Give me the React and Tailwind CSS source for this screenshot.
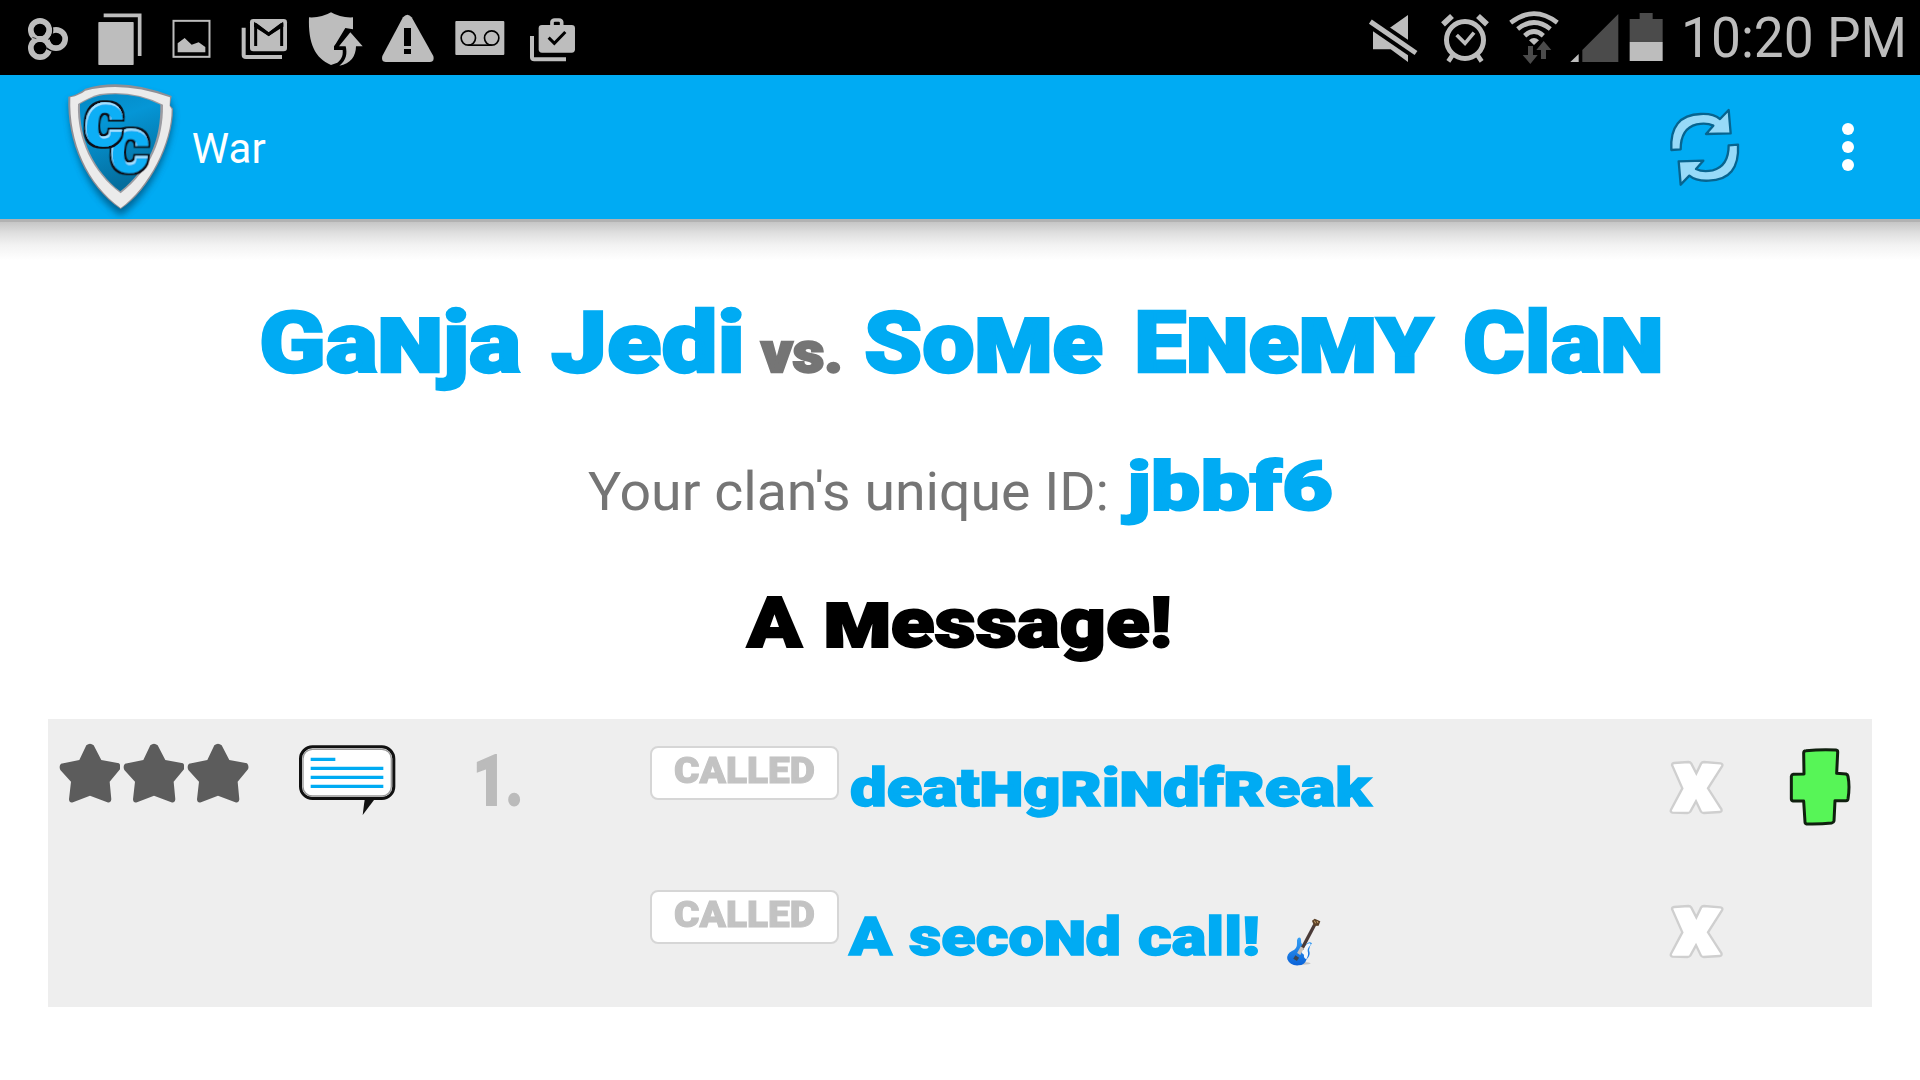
import React, { useLayoutEffect, useRef } from "react";

const SMALL_CAPS = "nmrhy";

// Draws one word stretched to an exact width; the display face has small-cap n, m, r, h and y.
function Fit({ text, width, plain = false, className = "" }) {
  const ref = useRef(null);
  useLayoutEffect(() => {
    const el = ref.current;
    const fit = () => {
      el.style.transform = "none";
      const natural = el.getBoundingClientRect().width;
      el.style.transform = `scaleX(${width / natural})`;
    };
    fit();
    document.fonts.ready.then(fit);
  }, [width]);
  return (
    <span className="block shrink-0 whitespace-nowrap" style={{ width }}>
      <span ref={ref} className={"inline-block origin-left " + className}>
        {plain
          ? text
          : text.split("").map((c, i) =>
              SMALL_CAPS.includes(c) ? (
                <span key={i} className="text-[1.1em] leading-[0] [font-variant-caps:small-caps]">
                  {c}
                </span>
              ) : (
                c
              )
            )}
      </span>
    </span>
  );
}

const DISPLAY = "font-['Roboto',sans-serif] font-black [-webkit-text-stroke:0.028em_currentColor]";

function Icon({ x, w, h = 225, y = 0, className = "", children }) {
  return (
    <svg
      viewBox={`${x} ${y} ${w} ${h}`}
      width={w / 3}
      height={h / 3}
      className={"block shrink-0 " + className}
      fill="#bdbdbd"
    >
      {children}
    </svg>
  );
}

function StatusBar() {
  return (
    <div className="flex h-[75px] w-full justify-between bg-black">
      <div className="flex">
        <Icon x={0} w={250}>
          <g fill="none" stroke="#bdbdbd" strokeWidth="17">
            <circle cx="168" cy="117" r="27.5" />
            <circle cx="120" cy="90" r="38" stroke="#000" strokeWidth="4" />
            <circle cx="120" cy="90" r="27.5" />
            <circle cx="120" cy="144" r="27.5" />
            <path d="M139 145l16 8" stroke="#000" strokeWidth="4" />
            <path d="M97 112l12 4M133 136l18 16" stroke="#000" strokeWidth="2" />
          </g>
        </Icon>
        <Icon x={250} w={225}>
          <rect x="296" y="66" width="106" height="129" rx="2" />
          <path d="M312 46H420V168" fill="none" stroke="#bdbdbd" strokeWidth="11" />
        </Icon>
        <Icon x={475} w={200}>
          <rect x="521.5" y="62.5" width="108" height="108" fill="none" stroke="#bdbdbd" strokeWidth="6" />
          <path d="M534 157V130l21-16 21 20 21-7 20 14v16z" />
        </Icon>
        <Icon x={675} w={225}>
          <rect x="750" y="57" width="111" height="97" rx="10" />
          <path d="M767 138V74l39 29 39-29v64" fill="none" stroke="#000" strokeWidth="9" />
          <path d="M762 70h8l36 27 36-27h8v10l-44 28-44-28z" fill="#000" />
          <path d="M731 83V165Q731 171 738 171H846" fill="none" stroke="#bdbdbd" strokeWidth="12" />
        </Icon>
        <Icon x={0} w={225}>
          <path d="M27 52Q65 54 93 37Q121 54 159 52V88L136 84 102 140V150H128C130 170 122 180 112 188L93 195C45 175 24 130 27 52z" />
          <path d="M150 88L102 139V148H132C135 170 125 188 104 194L118 200C155 188 168 170 168 139H190z" fill="#000" />
          <path d="M151 97L188 139H168C168 168 152 192 118 197C140 180 142 160 137 139H117z" />
        </Icon>
        <Icon x={225} w={200}>
          <path d="M309 52Q322 37 335 52L400 168Q405 185 390 186H257Q242 185 247 168z" />
          <rect x="312" y="84" width="21" height="54" fill="#000" />
          <rect x="312" y="147" width="21" height="15" fill="#000" />
        </Icon>
        <Icon x={425} w={225}>
          <rect x="465" y="63" width="147" height="102" rx="3" />
          <g fill="none" stroke="#000" strokeWidth="5">
            <circle cx="504" cy="114" r="21.5" />
            <circle cx="574" cy="114" r="21.5" />
            <path d="M504 135.5H574" />
          </g>
        </Icon>
        <Icon x={650} w={200}>
          <path d="M755 80V66Q756 60 763 60H776Q783 60 784 66V80" fill="none" stroke="#bdbdbd" strokeWidth="11" />
          <rect x="715" y="75" width="109" height="83" rx="10" />
          <path d="M745 113l17 17 33-34" fill="none" stroke="#000" strokeWidth="9" />
          <path d="M695 108V172Q695 178 702 178H797" fill="none" stroke="#bdbdbd" strokeWidth="12" />
        </Icon>
      </div>
      <div className="flex">
        <Icon x={0} w={210}>
          <path d="M144 45V186L92 148H39V92L70 92 92 82z" />
          <path d="M31 65L168 159" stroke="#000" strokeWidth="38" />
          <path d="M60 50l30 32-12-50z" fill="#000" />
          <path d="M31 65L168 159" stroke="#bdbdbd" strokeWidth="15" />
        </Icon>
        <Icon x={210} w={210}>
          <circle cx="315" cy="120" r="55.5" fill="none" stroke="#bdbdbd" strokeWidth="15" />
          <path d="M290 105l25 25 27-32" fill="none" stroke="#bdbdbd" strokeWidth="11" />
          <path d="M278 165l-13 19M352 165l13 19" stroke="#bdbdbd" strokeWidth="14" />
          <path d="M249 73l27-25M381 73l-27-25" stroke="#bdbdbd" strokeWidth="17" strokeLinecap="butt" />
        </Icon>
        <Icon x={420} w={200}>
          <g fill="none" stroke="#bdbdbd" strokeWidth="14">
            <path d="M452 68Q522 14 592 68" />
            <path d="M473 87Q522 48 571 87" />
            <path d="M494 107Q522 82 550 107" />
          </g>
          <path d="M507 121Q522 107 537 121L522 135z" />
          <path d="M504 138h15v27h14l-22 27-23-27h16zM543 177v-27h-14l22-27 23 27h-16v27z" fill="#4b4b4b" />
        </Icon>
        <Icon x={620} w={170}>
          <path d="M630 186L655 162V186z" />
          <path d="M666 186V150L774 42V186z" fill="#4b4b4b" />
        </Icon>
        <Icon x={790} w={170}>
          <path d="M810 126V57H840V39H879V57H909V126z" fill="#4b4b4b" />
          <rect x="810" y="126" width="99" height="57" />
        </Icon>
        <div className="h-[75px] w-[240px] pl-[1px] font-['Roboto',sans-serif] text-[55px] leading-[77px] text-[#bdbdbd]">
          <Fit plain text="10:20 PM" width={226} />
        </div>
      </div>
    </div>
  );
}

function Logo() {
  return (
    <svg viewBox="150 227 410 432" width="136.667" height="144" className="ml-[50px] block shrink-0">
      <defs>
        <linearGradient id="shieldFill" x1="0" y1="0" x2="0.3" y2="1">
          <stop offset="0" stopColor="#0488c4" />
          <stop offset="0.35" stopColor="#0596d6" />
          <stop offset="1" stopColor="#046d9d" />
        </linearGradient>
        <filter id="soft" x="-20%" y="-20%" width="140%" height="140%">
          <feGaussianBlur stdDeviation="11" />
        </filter>
        <filter id="outline" x="-20%" y="-20%" width="140%" height="140%">
          <feMorphology in="SourceAlpha" operator="dilate" radius="5" result="fat" />
          <feFlood floodColor="#0b1114" />
          <feComposite in2="fat" operator="in" result="edge" />
          <feOffset in="SourceAlpha" dx="4" dy="5" result="inner" />
          <feComposite in="SourceAlpha" in2="inner" operator="out" result="rim" />
          <feFlood floodColor="#a5e2ff" />
          <feComposite in2="rim" operator="in" result="shine" />
          <feMerge>
            <feMergeNode in="edge" />
            <feMergeNode in="SourceGraphic" />
            <feMergeNode in="shine" />
          </feMerge>
        </filter>
      </defs>
      <path
        d="M208 305Q240 300 258 280Q370 260 508 300L519 340C520 445 450 590 362 648C260 580 206 440 208 305z"
        fill="#034f78"
        opacity="0.75"
        filter="url(#soft)"
      />
      <path
        d="M205 292Q235 285 256 268Q370 233 515 290L510 318L519 328C520 430 450 572 362 629C260 560 200 430 205 292z"
        fill="#8f8f95"
      />
      <path
        d="M211 294Q240 287 256 274Q370 244 510 294L509 320L515 329C516 430 447 565 362 626C263 555 206 430 211 294z"
        fill="#ebebeb"
      />
      <path d="M234 314Q270 292 300 284Q400 270 489 316C490 420 455 505 362 582C278 520 230 420 234 314z" fill="#9b9ba1" />
      <path d="M240 314Q280 290 310 287Q400 276 481 316C483 420 448 505 361 576C282 515 237 420 240 314z" fill="url(#shieldFill)" />
      <g
        fontFamily="Roboto"
        fontWeight="900"
        fontSize="174"
        stroke="#10aff6"
        strokeWidth="8"
        strokeLinejoin="miter"
        fill="#10aff6"
      >
        <text transform="translate(330 516) skewX(-3) scale(0.97 1)" filter="url(#outline)">
          C
        </text>
        <text transform="translate(252 437) skewX(-3) scale(0.98 1)" filter="url(#outline)">
          C
        </text>
      </g>
    </svg>
  );
}

const ARROW =
  "M64 165Q58 60 152 57Q190 55 210 72L236 45L242 115L168 117L190 92Q170 82 140 88Q92 100 92 163z";

function AppBar() {
  return (
    <div className="flex h-[144px] w-full items-center bg-[#00abf3]">
      <Logo />
      <div className="ml-[5px] flex-1 pt-[4px] font-['Roboto',sans-serif] text-[42px] leading-[50px] tracking-[0.2px] text-white">
        War
      </div>
      <svg viewBox="0 0 330 330" width="110" height="110" className="mt-[6px] mr-[82px] block shrink-0">
        <g fill="#97daf8" stroke="#07648f" strokeWidth="7" strokeLinejoin="round">
          <path d={ARROW} />
          <path d={ARROW} transform="rotate(180 164 157)" />
        </g>
      </svg>
      <div className="mr-[66px] flex flex-col gap-[6px] pb-[1px]">
        <span className="size-[12px] rounded-full bg-white" />
        <span className="size-[12px] rounded-full bg-white" />
        <span className="size-[12px] rounded-full bg-white" />
      </div>
    </div>
  );
}

function Star() {
  return (
    <svg viewBox="55 99 185 181" width="61.667" height="60.333" className="block">
      <path
        d="M137 106Q148 96 159 106L182 150L235 160Q242 168 238 178L207 215L212 268Q210 280 200 277L148 257L97 277Q86 280 85 268L91 215L59 180Q54 168 61 161L116 150z"
        fill="#5c5c5c"
      />
    </svg>
  );
}

function Bubble() {
  return (
    <svg viewBox="774 100 295 220" width="98.333" height="73.333" className="block">
      <path d="M975 262L968 316L1006 266z" fill="#111" />
      <rect x="781.5" y="111.5" width="280" height="155" rx="36" fill="#fff" stroke="#111" strokeWidth="9" />
      <rect x="789" y="119" width="265" height="140" rx="28" fill="none" stroke="#999" strokeWidth="4" />
      <path d="M812 149H886M812 176H1030M812 203H1030M812 230H1030" stroke="#00abf3" strokeWidth="10" />
    </svg>
  );
}

function CalledBadge() {
  return (
    <div className="flex h-[54px] w-[189px] shrink-0 rounded-[8px] border-2 border-[#d6d6d6] bg-white pl-[22px]">
      <div className={`${DISPLAY} text-[36px] leading-[47px] text-[#c3c3c3]`}>
        <Fit text="CALLED" width={141} />
      </div>
    </div>
  );
}

function CloseMark() {
  return (
    <svg viewBox="88 150 168 168" width="56" height="56" className="block">
      <path
        d="M97 165Q97 160 103 159L146 156Q152 156 155 161L170 190L184 161Q187 156 193 156L243 160Q251 162 247 169L205 235L245 297Q248 304 241 306L192 309Q187 309 184 305L169 274L152 305Q149 309 143 309L98 308Q91 306 94 299L128 235z"
        fill="#fff"
        stroke="#cfcfcf"
        strokeWidth="7"
      />
    </svg>
  );
}

function Plus() {
  return (
    <svg viewBox="442 112 192 240" width="64" height="80" className="block">
      <path
        d="M489 130Q489 123 496 123Q540 119 586 121Q592 122 591 129L588 191L616 193Q621 195 622 200Q628 230 622 268Q621 273 616 273L583 273L580 334Q579 339 573 340Q540 344 498 343Q493 342 493 337L489 274L457 274Q452 273 452 268V200Q453 195 458 194L490 193z"
        fill="#57f557"
        stroke="#10200f"
        strokeWidth="9"
        strokeLinejoin="round"
      />
    </svg>
  );
}

function Guitar() {
  return (
    <svg viewBox="45 35 115 150" width="38.333" height="50" className="block">
      <defs>
        <linearGradient id="body" x1="0" y1="0" x2="0" y2="1">
          <stop offset="0" stopColor="#35a0f5" />
          <stop offset="1" stopColor="#0a62d8" />
        </linearGradient>
      </defs>
      <ellipse cx="100" cy="174" rx="22" ry="4" fill="#c4c4c4" />
      <path
        d="M84 98Q92 94 93 103Q92 114 98 118Q108 122 113 113Q120 108 126 114Q118 122 117 134Q123 150 110 162Q104 180 86 180Q60 182 52 162Q49 145 66 137Q82 130 81 115Q79 103 84 98z"
        fill="url(#body)"
      />
      <path d="M94 130L112 116Q122 110 122 118Q112 128 113 137Q117 148 109 162Q100 158 102 148Q92 142 94 130z" fill="#f4f8fc" />
      <path d="M95 132L134 58" stroke="#4a3b38" strokeWidth="10" />
      <path d="M86 146L97 126" stroke="#c9c1ba" strokeWidth="11" />
      <path d="M73 155L84 162" stroke="#3b4552" strokeWidth="12" />
      <path d="M126 46L134 40L151 48L146 61L132 62z" fill="#5a4028" />
      <path d="M133 46l4 8M141 47l3 6" stroke="#c9a46a" strokeWidth="3" />
    </svg>
  );
}

export default function App() {
  return (
    <div className="h-[1080px] w-[1920px] overflow-hidden bg-white">
      <StatusBar />
      <AppBar />
      <div className="h-[3px] bg-[#b2b2b2]" />
      <div className="h-[38px] bg-[linear-gradient(to_bottom,#c6c6c6,#e0e0e0_30%,#f3f3f3_62%,#ffffff)]" />

      <div className={`${DISPLAY} mt-[39px] flex h-[88px] items-baseline pl-[259px] text-[86px] leading-[88px] text-[#00abf3]`}>
        <Fit text="Ganja" width={262} />
        <div className="w-[30px]" />
        <Fit text="Jedi" width={194} />
        <div className="w-[16px]" />
        <div className="text-[58px] text-[#757575]">
          <Fit text="vs." width={82} />
        </div>
        <div className="w-[21px]" />
        <Fit text="Some" width={239} />
        <div className="w-[31px]" />
        <Fit text="Enemy" width={299} />
        <div className="w-[30px]" />
        <Fit text="Clan" width={200} />
      </div>

      <div className="mt-[65px] flex h-[70px] items-baseline pl-[588px] leading-[70px]">
        <div className="font-['Roboto',sans-serif] text-[54px] text-[#757575]">
          <Fit plain text={"Your clan's unique ID:"} width={521} />
        </div>
        <div className="w-[18px]" />
        <div className={`${DISPLAY} text-[69px] text-[#00abf3]`}>
          <Fit text="jbbf6" width={206} />
        </div>
      </div>

      <div className={`${DISPLAY} mt-[65px] flex h-[72px] items-baseline gap-[22px] pl-[747px] text-[71px] leading-[72px] text-black`}>
        <Fit text="A" width={55} />
        <Fit text="message!" width={348} />
      </div>

      <div className="mx-[48px] mt-[60px] h-[288px] bg-[#eeeeee]">
        <div className="flex h-[144px] items-start">
          <div className="ml-[10.5px] mt-[24px] flex gap-[2.6px]">
            <Star />
            <Star />
            <Star />
          </div>
          <div className="ml-[49.3px] mt-[24px]">
            <Bubble />
          </div>
          <div className={`${DISPLAY} ml-[77px] mt-[27px] text-[70px] leading-[70px] text-[#bbbbbb]`}>
            <Fit text="1." width={50} />
          </div>
          <div className="ml-[127px] mt-[27px]">
            <CalledBadge />
          </div>
          <div className={`${DISPLAY} ml-[11px] mt-[42px] text-[54px] leading-[54px] text-[#00abf3]`}>
            <Fit text="deathgrindfreak" width={521} />
          </div>
          <div className="ml-auto mr-[63px] mt-[41px]">
            <CloseMark />
          </div>
          <div className="mr-[20.5px] mt-[28px]">
            <Plus />
          </div>
        </div>
        <div className="flex h-[144px] items-start pl-[602px]">
          <div className="mt-[27px]">
            <CalledBadge />
          </div>
          <div className={`${DISPLAY} ml-[10px] mt-[47px] flex gap-[17px] text-[54px] leading-[54px] text-[#00abf3]`}>
            <Fit text="A" width={43} />
            <Fit text="second" width={212} />
            <Fit text="call!" width={122} />
          </div>
          <div className="ml-[25px] mt-[54px]">
            <Guitar />
          </div>
          <div className="ml-auto mr-[147px] mt-[41px]">
            <CloseMark />
          </div>
        </div>
      </div>
    </div>
  );
}
